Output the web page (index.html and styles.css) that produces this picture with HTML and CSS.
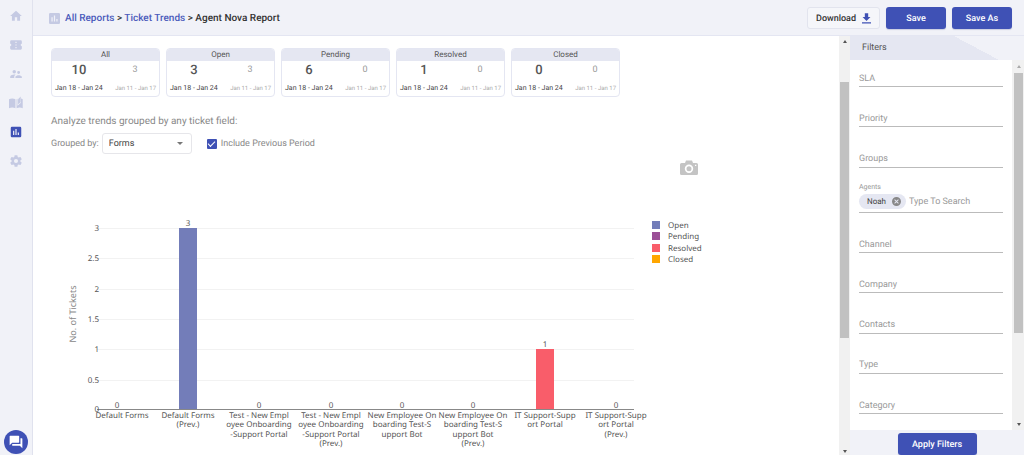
FILE: index.html
```html
<!DOCTYPE html>
<html lang="en">
<head>
<meta charset="utf-8">
<meta name="viewport" content="width=device-width, initial-scale=1">
<title>Agent Nova Report</title>
<link rel="stylesheet" href="styles.css">
</head>
<body>
<div class="app">
  <nav class="rail" aria-label="Main">
    <a href="#" class="rail-link" aria-label="Home"><svg viewBox="0 0 24 24"><path d="M10 20v-6h4v6h5v-8h3L12 3 2 12h3v8z"/></svg></a>
    <a href="#" class="rail-link" aria-label="Tickets"><svg viewBox="0 0 24 24"><path d="M22 10V6a2 2 0 0 0-2-2H4a2 2 0 0 0-2 2v4a2 2 0 0 1 0 4v4a2 2 0 0 0 2 2h16a2 2 0 0 0 2-2v-4a2 2 0 0 1 0-4zm-9 7.500h-2v-2h2zm0-4.500h-2v-2h2zm0-4.500h-2v-2h2z"/></svg></a>
    <a href="#" class="rail-link" aria-label="Contacts"><svg viewBox="0 0 24 24"><path d="M16.500 12a2.500 2.500 0 1 0 0-5 2.500 2.500 0 0 0 0 5zM9 11a3 3 0 1 0 0-6 3 3 0 0 0 0 6zm7.500 3c-1.830 0-5.500.920-5.500 2.750V19h11v-2.250c0-1.830-3.670-2.750-5.500-2.750zM9 13c-2.330 0-7 1.170-7 3.500V19h7v-2.250c0-.850.330-2.340 2.370-3.470C10.500 13.100 9.660 13 9 13z"/></svg></a>
    <a href="#" class="rail-link" aria-label="Knowledge base"><svg viewBox="0 0 24 24"><path d="M0 5.500C3 3.700 8 3.700 11 5.500V21C8 19.300 3 19.300 0 21z"/><path d="M13 5.500l1.500-.700V16.500l6-5V4.300c1 .200 2 .500 3 1.200V21c-3-1.700-7.500-1.700-10.500 0z"/><path d="M15.500 5.500L20 1v9.500L15.500 14z"/></svg></a>
    <a href="#" class="rail-link rail-link-active" aria-label="Reports"><svg viewBox="0 0 24 24"><path d="M19 3H5a2 2 0 0 0-2 2v14a2 2 0 0 0 2 2h14a2 2 0 0 0 2-2V5a2 2 0 0 0-2-2zM9 17H7v-7h2zm4 0h-2V7h2zm4 0h-2v-4h2z"/></svg></a>
    <a href="#" class="rail-link" aria-label="Settings"><svg viewBox="0 0 24 24"><path d="M19.430 12.980c.040-.320.070-.640.070-.980s-.030-.660-.070-.980l2.110-1.650a.5.5 0 0 0 .120-.640l-2-3.460a.5.5 0 0 0-.610-.220l-2.490 1a7.300 7.300 0 0 0-1.690-.980l-.380-2.650A.49.490 0 0 0 14 2h-4a.49.490 0 0 0-.490.420l-.380 2.650c-.610.250-1.170.590-1.690.980l-2.490-1a.5.5 0 0 0-.610.220l-2 3.460a.5.5 0 0 0 .120.640l2.110 1.650a8 8 0 0 0 0 1.960l-2.110 1.650a.5.5 0 0 0-.120.640l2 3.460c.120.220.390.300.610.220l2.490-1c.520.400 1.080.730 1.690.980l.380 2.650c.030.240.240.420.490.420h4c.250 0 .460-.180.490-.420l.380-2.650a7.300 7.300 0 0 0 1.690-.980l2.490 1c.230.090.490 0 .610-.220l2-3.460a.5.5 0 0 0-.120-.640zM12 15.500a3.500 3.500 0 1 1 0-7 3.500 3.500 0 0 1 0 7z"/></svg></a>
    <button type="button" class="chat" aria-label="Open chat"><svg viewBox="1 1 22 22"><path d="M21 6h-2v9H6v2a1 1 0 0 0 1 1h11l4 4V7a1 1 0 0 0-1-1zM17 12V3a1 1 0 0 0-1-1H3a1 1 0 0 0-1 1v14l4-4h10a1 1 0 0 0 1-1z"/></svg></button>
  </nav>

  <div class="page">
    <header class="topbar">
      <svg class="crumb-icon" viewBox="3 3 18 18" aria-hidden="true"><path d="M19 3H5a2 2 0 0 0-2 2v14a2 2 0 0 0 2 2h14a2 2 0 0 0 2-2V5a2 2 0 0 0-2-2zM9 17H7v-7h2zm4 0h-2V7h2zm4 0h-2v-4h2z"/></svg>
      <div class="crumbs"><a href="#">All Reports</a> &gt; <a href="#">Ticket Trends</a> &gt; Agent Nova Report</div>
      <div class="actions">
        <button type="button" class="btn btn-plain">Download<svg viewBox="4 2 16 19" aria-hidden="true"><path d="M19 9h-4V2H9v7H5l7 7zM4 18v2.500h16V18z"/></svg></button>
        <button type="button" class="btn">Save</button>
        <button type="button" class="btn">Save As</button>
      </div>
    </header>

    <div class="body">
      <main class="report">
        <section class="cards" aria-label="Totals">
          <article class="card"><h2>All</h2><div class="pair"><strong>10</strong><span>3</span></div><div class="dates"><span>Jan 18 - Jan 24</span><small>Jan 11 - Jan 17</small></div></article>
          <article class="card"><h2>Open</h2><div class="pair"><strong>3</strong><span>3</span></div><div class="dates"><span>Jan 18 - Jan 24</span><small>Jan 11 - Jan 17</small></div></article>
          <article class="card"><h2>Pending</h2><div class="pair"><strong>6</strong><span>0</span></div><div class="dates"><span>Jan 18 - Jan 24</span><small>Jan 11 - Jan 17</small></div></article>
          <article class="card"><h2>Resolved</h2><div class="pair"><strong>1</strong><span>0</span></div><div class="dates"><span>Jan 18 - Jan 24</span><small>Jan 11 - Jan 17</small></div></article>
          <article class="card"><h2>Closed</h2><div class="pair"><strong>0</strong><span>0</span></div><div class="dates"><span>Jan 18 - Jan 24</span><small>Jan 11 - Jan 17</small></div></article>
        </section>
        <p class="lead">Analyze trends grouped by any ticket field:</p>
        <div class="controls">
          <label for="group">Grouped by:</label>
          <span class="group"><select id="group"><option>Forms</option></select><svg viewBox="0 0 6 3" aria-hidden="true"><path d="M0 0h6L3 3z"/></svg></span>
          <input type="checkbox" id="prev" class="check" checked>
          <label for="prev">Include Previous Period</label>
        </div>
        <div class="tools">
          <button type="button" class="camera" aria-label="Save chart as image"><svg viewBox="0 0 18 16"><path fill-rule="evenodd" d="M1.500 3H5l1-2.500h6L13 3h3.500A1.500 1.500 0 0 1 18 4.500v9a1.500 1.500 0 0 1-1.500 1.500h-15A1.500 1.500 0 0 1 0 13.500v-9A1.500 1.500 0 0 1 1.500 3zM9 4.500a4.200 4.200 0 1 0 0 8.400 4.200 4.200 0 0 0 0-8.400zM9 6.200a2.500 2.500 0 1 1 0 5 2.500 2.500 0 0 1 0-5zM15 4.700v1.200h1.300V4.700z"/></svg></button>
        </div>
        <svg class="chart" viewBox="0 0 788 243" role="img" aria-label="Number of tickets by form">
          <g class="grid">
            <path d="M46 16.500H583M46 46.500H583M46 77.500H583M46 107.500H583M46 137.500H583M46 168.500H583"/>
          </g>
          <rect class="open" x="128" y="16" width="18" height="182"/>
          <rect class="resolved" x="485" y="137" width="18" height="61"/>
          <path class="axis" d="M46 197.500H583"/>
          <g class="ticks">
            <text x="48" y="19">3</text><text x="48" y="49">2.5</text><text x="48" y="80">2</text><text x="48" y="110">1.5</text><text x="48" y="140">1</text><text x="48" y="171">0.5</text><text x="48" y="200">0</text>
          </g>
          <text class="title" transform="translate(25 102) rotate(-90)">No. of Tickets</text>
          <g class="labels">
            <text x="66" y="196">0</text><text x="137" y="14">3</text><text x="208" y="196">0</text><text x="280" y="196">0</text><text x="351" y="196">0</text><text x="422" y="196">0</text><text x="494" y="135">1</text><text x="565" y="196">0</text>
            <text x="71" y="206">Default Forms</text>
            <text y="206"><tspan x="137">Default Forms</tspan><tspan x="137" y="215">(Prev.)</tspan></text>
            <text y="206"><tspan x="208">Test - New Empl</tspan><tspan x="208" y="215">oyee Onboarding</tspan><tspan x="208" y="225">-Support Portal</tspan></text>
            <text y="206"><tspan x="280">Test - New Empl</tspan><tspan x="280" y="215">oyee Onboarding</tspan><tspan x="280" y="225">-Support Portal</tspan><tspan x="280" y="234">(Prev.)</tspan></text>
            <text y="206"><tspan x="351">New Employee On</tspan><tspan x="351" y="215">boarding Test-S</tspan><tspan x="351" y="225">upport Bot</tspan></text>
            <text y="206"><tspan x="422">New Employee On</tspan><tspan x="422" y="215">boarding Test-S</tspan><tspan x="422" y="225">upport Bot</tspan><tspan x="422" y="234">(Prev.)</tspan></text>
            <text y="206"><tspan x="494">IT Support-Supp</tspan><tspan x="494" y="215">ort Portal</tspan></text>
            <text y="206"><tspan x="565">IT Support-Supp</tspan><tspan x="565" y="215">ort Portal</tspan><tspan x="565" y="225">(Prev.)</tspan></text>
          </g>
          <g class="legend">
            <rect class="open" x="601" y="9" width="8" height="8"/><text x="617" y="16">Open</text>
            <rect class="pending" x="601" y="20" width="8" height="8"/><text x="617" y="27">Pending</text>
            <rect class="resolved" x="601" y="32" width="8" height="8"/><text x="617" y="39">Resolved</text>
            <rect class="closed" x="601" y="43" width="8" height="8"/><text x="617" y="50">Closed</text>
          </g>
        </svg>
      </main>
      <div class="bar bar-main" aria-hidden="true"><i class="up"></i><i class="thumb"></i><i class="down"></i></div>

      <aside class="filters">
        <h2 class="filters-title">Filters</h2>
        <div class="filters-scroll">
          <form class="fields">
            <input class="field" aria-label="SLA" placeholder="SLA">
            <input class="field" aria-label="Priority" placeholder="Priority">
            <input class="field" aria-label="Groups" placeholder="Groups">
            <div class="agents">
              <label for="agents">Agents</label>
              <div class="agents-row">
                <span class="chip">Noah<button type="button" aria-label="Remove Noah"><svg viewBox="2 2 20 20"><path d="M12 2a10 10 0 1 0 0 20 10 10 0 0 0 0-20zm5 13.590L15.590 17 12 13.410 8.410 17 7 15.590 10.590 12 7 8.410 8.410 7 12 10.590 15.590 7 17 8.410 13.410 12z"/></svg></button></span>
                <input id="agents" placeholder="Type To Search">
              </div>
            </div>
            <input class="field" aria-label="Channel" placeholder="Channel">
            <input class="field" aria-label="Company" placeholder="Company">
            <input class="field" aria-label="Contacts" placeholder="Contacts">
            <input class="field" aria-label="Type" placeholder="Type">
            <input class="field" aria-label="Category" placeholder="Category">
          </form>
          <div class="bar bar-side" aria-hidden="true"><i class="up"></i><i class="thumb"></i><i class="down"></i></div>
        </div>
        <div class="filters-foot"><button type="button" class="btn">Apply Filters</button></div>
      </aside>
    </div>
  </div>
</div>
</body>
</html>
```

FILE: styles.css
```css
* { box-sizing: border-box; }
body { margin: 0; font-family: Roboto, "Liberation Sans", sans-serif; color: #444; background: #fff; text-rendering: geometricPrecision; }
button, input, select { font: inherit; color: inherit; margin: 0; text-rendering: inherit; }
button { cursor: pointer; }
svg { display: block; fill: currentColor; }
h2, p { margin: 0; font-weight: 400; }

.app { display: flex; height: 100vh; }
.rail { width: 33px; flex: none; display: flex; flex-direction: column; align-items: center; gap: 15px; padding: 9px 0 1px; background: #f1f2f8; border-right: 1px solid #e0e2ee; }
.rail-link { color: #c5cae3; }
.rail-link svg { width: 14px; height: 14px; }
.rail-link-active { color: #3f51b5; }
.chat { width: 24px; height: 24px; margin-top: auto; padding: 5px; border: 0; border-radius: 50%; background: #3f51b5; color: #fff; }
.chat svg { width: 14px; height: 14px; }

.page { flex: 1; min-width: 0; display: flex; flex-direction: column; }
.topbar { flex: none; display: flex; align-items: center; height: 36px; padding: 1px 12px 0 16px; background: #f1f2f8; border-bottom: 1px solid #e4e6f2; }
.crumb-icon { width: 11px; height: 11px; margin-right: 5px; color: #c5cae3; }
.crumbs { padding-top: 1px; font-size: 10px; font-weight: 500; color: #333; white-space: nowrap; }
.crumbs a { color: #4a5abb; text-decoration: none; }
.actions { display: flex; gap: 6px; margin-left: auto; }
.btn { height: 22px; min-width: 60px; padding: 1px 8px 0; border: 0; border-radius: 3px; background: #3f51b5; color: #fff; font-size: 9px; font-weight: 500; box-shadow: 0 1px 1px #c9cce0; }
.btn-plain { display: flex; align-items: center; gap: 6px; min-width: 72px; border: 1px solid #e2e4ee; background: #f5f6fa; color: #333; box-shadow: none; }
.btn-plain svg { width: 9px; height: 11px; color: #3f51b5; }

.body { flex: 1; min-height: 0; display: flex; }
.report { flex: 1; min-width: 0; overflow: hidden; padding: 12px 0 0 18px; }
.cards { display: flex; gap: 6px; }
.card { width: 109px; height: 49px; border: 1px solid #e4e6f2; border-radius: 4px; overflow: hidden; }
.card h2 { height: 12px; line-height: 12px; background: #e5e7f2; font-size: 8px; text-align: center; color: #555; }
.pair, .dates { display: flex; align-items: center; justify-content: space-between; }
.pair { height: 18px; padding: 0 20px 0 0; }
.pair strong { width: 54px; text-align: center; font-size: 13px; font-weight: 500; color: #555; }
.pair span { width: 8px; text-align: center; font-size: 9px; color: #999; }
.dates { height: 17px; padding: 1px 3px 0; font-size: 7px; white-space: nowrap; color: #444; }
.dates small { font-size: 6px; color: #aaa; }
.lead { margin-top: 19px; font-size: 10px; line-height: 12px; color: #888; }
.controls { display: flex; align-items: center; margin-top: 5px; font-size: 9px; color: #888; }
.group { display: grid; align-items: center; width: 90px; margin: 0 15px 0 3px; }
.group select, .group svg { grid-area: 1 / 1; }
.group select { appearance: none; height: 21px; padding: 0 6px; border: 1px solid #e6e6ea; border-radius: 3px; color: #444; background: #fff; }
.group svg { justify-self: end; width: 6px; height: 3px; margin-right: 9px; color: #777; pointer-events: none; }
.check { appearance: none; width: 10px; height: 10px; margin-right: 4px; border-radius: 1px; background: #3f51b5; display: grid; place-items: center; }
.check:checked::before { content: ""; width: 6px; height: 3px; margin-bottom: 2px; border: solid #fff; border-width: 0 0 1px 1px; transform: rotate(-45deg); }
.tools { display: flex; justify-content: flex-end; margin-top: 6px; padding-right: 141px; }
.camera { padding: 0; border: 0; background: none; color: #c4c4c4; }
.camera svg { width: 18px; height: 16px; }

.chart { width: 100%; height: auto; margin-top: 36px; font-family: "Noto Sans", Verdana, sans-serif; font-size: 8px; fill: #555; }
.grid { stroke: #f2f2f2; }
.axis { stroke: #888; }
.open { fill: #737db9; }
.pending { fill: #9b4f96; }
.resolved { fill: #f95d6a; }
.closed { fill: #ffa600; }
.ticks { text-anchor: end; }
.title, .labels { text-anchor: middle; }
.title { font-size: 9px; fill: #888; }

.bar { flex: none; display: flex; flex-direction: column; align-items: center; background: #f1f1f1; }
.bar i { display: block; }
.up, .down { border: 2px solid transparent; width: 4px; }
.up { border-top: 0; border-bottom: 3px solid #555; }
.down { border-bottom: 0; border-top: 3px solid #555; }
.thumb { width: 100%; background: #c1c1c1; }
.bar-main { width: 11px; padding: 4px 1px 2px; justify-content: space-between; }
.bar-main .thumb { height: 62%; margin-bottom: 73px; }
.bar-side { width: 12px; padding: 5px 1px 4px 2px; justify-content: space-between; }
.bar-side .thumb { height: 72%; margin-bottom: 85px; }
.bar-side .up { border-bottom-color: #aaa; }

.filters { width: 174px; flex: none; display: flex; flex-direction: column; }
.filters-title { flex: none; height: 24px; padding: 0 12px; line-height: 24px; font-size: 9px; color: #555; background: linear-gradient(28deg, #e5e7f2 0 68%, #f1f2f8 68%); }
.filters-scroll { flex: 1; min-height: 0; display: flex; }
.fields { flex: 1; min-width: 0; overflow: hidden; display: flex; flex-direction: column; justify-content: space-between; padding: 11px 9px 16px; }
.field { display: block; width: 100%; height: 16px; padding: 0; border: 0; border-bottom: 1px solid #bbb; background: none; font-size: 9px; }
::placeholder { color: #999; opacity: 1; }
.agents { margin-top: -9px; border-bottom: 1px solid #bbb; }
.agents label { display: block; font-size: 7px; line-height: 8px; color: #999; }
.agents-row { display: flex; align-items: center; gap: 3px; margin: 3px 0; }
.agents-row input { flex: 1; min-width: 0; height: 15px; padding: 1px 0 0; border: 0; background: none; font-size: 9px; }
.chip { display: flex; align-items: center; gap: 6px; height: 15px; padding: 0 5px 0 8px; border-radius: 8px; background: #e5e7f2; font-size: 8px; color: #444; }
.chip button { padding: 0; border: 0; background: none; color: #888; }
.chip svg { width: 9px; height: 9px; }
.filters-foot { flex: none; height: 25px; padding-top: 3px; display: flex; justify-content: center; background: #f1f2f8; }
.filters-foot .btn { width: 79px; }
```
